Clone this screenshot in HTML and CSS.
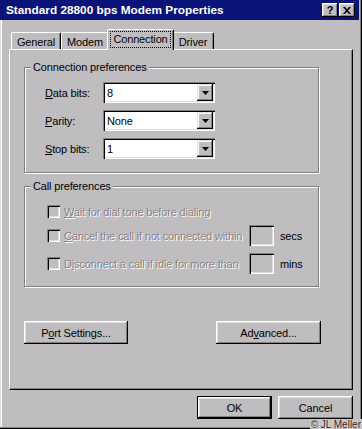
FILE: index.html
```html
<!DOCTYPE html>
<html>
<head>
<meta charset="utf-8">
<title>Standard 28800 bps Modem Properties</title>
<link rel="stylesheet" href="styles.css">
</head>
<body>
<div class="window">
  <div class="titlebar">
    <span class="title">Standard 28800 bps Modem Properties</span>
    <div class="caption-btns">
      <span class="cbtn help">?</span>
      <span class="cbtn close"><svg width="8" height="7" viewBox="0 0 8 7"><path d="M0 0h2l2 2.2L6 0h2L5 3.5 8 7H6L4 4.8 2 7H0l3-3.5z" fill="#000"/></svg></span>
    </div>
  </div>
  <div class="tabs">
    <div class="tab tab-general">General</div>
    <div class="tab tab-modem">Modem</div>
    <div class="tab tab-sel"><span class="focus">Connection</span></div>
    <div class="tab tab-driver">Driver</div>
  </div>
  <div class="panel">
    <div class="group g1">
      <span class="legend">Connection preferences</span>
      <div class="field">
        <span class="flabel"><u>D</u>ata bits:</span>
        <div class="combo"><span class="cval">8</span><span class="drop"><svg width="7" height="4" viewBox="0 0 7 4"><path d="M0 0h7L3.5 4z" fill="#000"/></svg></span></div>
      </div>
      <div class="field">
        <span class="flabel"><u>P</u>arity:</span>
        <div class="combo"><span class="cval">None</span><span class="drop"><svg width="7" height="4" viewBox="0 0 7 4"><path d="M0 0h7L3.5 4z" fill="#000"/></svg></span></div>
      </div>
      <div class="field">
        <span class="flabel"><u>S</u>top bits:</span>
        <div class="combo"><span class="cval">1</span><span class="drop"><svg width="7" height="4" viewBox="0 0 7 4"><path d="M0 0h7L3.5 4z" fill="#000"/></svg></span></div>
      </div>
    </div>
    <div class="group g2">
      <span class="legend">Call preferences</span>
      <div class="crow r1">
        <div class="check"><span class="cb"></span><span class="dis"><u>W</u>ait for dial tone before dialing</span></div>
      </div>
      <div class="crow">
        <div class="check"><span class="cb"></span><span class="dis"><u>C</u>ancel the call if not connected within</span></div>
        <span class="edit"></span>
        <span class="unit">secs</span>
      </div>
      <div class="crow">
        <div class="check"><span class="cb"></span><span class="dis">D<u>i</u>sconnect a call if idle for more than</span></div>
        <span class="edit"></span>
        <span class="unit">mins</span>
      </div>
    </div>
    <div class="btnrow">
      <span class="btn port">P<u>o</u>rt Settings...</span>
      <span class="btn adv">Ad<u>v</u>anced...</span>
    </div>
  </div>
  <div class="dlgbtns">
    <span class="btn ok">OK</span>
    <span class="btn cancel">Cancel</span>
  </div>
  <span class="copy">© JL Meller</span>
</div>
</body>
</html>
```
FILE: styles.css
```css
* { box-sizing: border-box; }
html, body { margin: 0; padding: 0; }
body {
  width: 362px;
  height: 429px;
  overflow: hidden;
  background: #c0bdc0;
  font-family: "Liberation Sans", Arial, sans-serif;
  font-size: 11px;
  letter-spacing: -0.15px;
  color: #000;
}
u { text-decoration: underline; text-underline-offset: 1px; }

.window {
  position: relative;
  width: 362px;
  height: 429px;
  background: #c0bdc0;
  box-shadow: inset -1px -1px #000, inset -2px -2px #808080, inset 1px 0 #dfdfdf, inset 2px 0 #fff;
}

.titlebar {
  height: 20px;
  margin-right: 3px;
  background: #0a1478;
  display: flex;
  align-items: center;
  justify-content: space-between;
  padding: 0 4px 0 6px;
  color: #fff;
  font-weight: bold;
  font-size: 11.8px;
  letter-spacing: 0;
}
.caption-btns { display: flex; gap: 1px; }
.cbtn {
  width: 16px;
  height: 14px;
  background: #c0bdc0;
  box-shadow: inset -1px -1px #000, inset 1px 1px #fff, inset -2px -2px #808080, inset 2px 2px #dfdfdf;
  display: flex;
  align-items: center;
  justify-content: center;
  color: #000;
  font-size: 11px;
  font-weight: bold;
  line-height: 14px;
}

.tabs {
  display: flex;
  align-items: flex-end;
  height: 20px;
  margin-top: 9px;
  padding-left: 11px;
  position: relative;
  z-index: 2;
}
.tab {
  height: 17px;
  display: flex;
  align-items: center;
  justify-content: center;
  padding-top: 1px;
  background: #c0bdc0;
  border-left: 1px solid #fff;
  border-top: 1px solid #fff;
  border-right: 1px solid #000;
  border-radius: 2px 2px 0 0;
  box-shadow: inset -1px 0 #808080;
  position: relative;
}
.tab-general { width: 50px; }
.tab-modem { width: 48px; }
.tab-driver { width: 42px; z-index: 1; }
.tab-sel {
  width: 67px;
  height: 21px;
  margin: 0 -2px -1px -2px;
  padding-top: 0;
  padding-bottom: 2px;
  z-index: 3;
}
.focus {
  outline: 1px dotted #000;
  outline-offset: 0;
  padding: 1px 2px;
  line-height: 13px;
}

.panel {
  margin-left: 9px;
  width: 344px;
  height: 341px;
  border-left: 1px solid #fff;
  border-top: 1px solid #fff;
  border-right: 1px solid #000;
  border-bottom: 1px solid #000;
  box-shadow: inset -1px -1px #808080;
  padding: 17px 0 0 14px;
}

.group {
  position: relative;
  width: 295px;
  border: 1px solid #808080;
  box-shadow: inset 1px 1px #fff, 1px 1px #fff;
}
.g1 { height: 106px; padding: 14px 0 0 20px; }
.g2 { height: 101px; margin-top: 13px; padding: 18px 0 0 22px; }
.legend {
  position: absolute;
  top: -7px;
  left: 6px;
  padding: 0 2px;
  background: #c0bdc0;
  line-height: 13px;
}

.field {
  display: flex;
  align-items: center;
  height: 21px;
  margin-bottom: 7px;
}
.flabel { width: 58px; }
.combo {
  width: 112px;
  height: 21px;
  background: #fff;
  display: flex;
  align-items: center;
  padding: 2px;
  box-shadow: inset 1px 1px #808080, inset 2px 2px #000, inset -1px -1px #fff, inset -2px -2px #dfdfdf;
}
.cval { flex: 1; padding-left: 2px; }
.drop {
  width: 16px;
  height: 17px;
  background: #c0bdc0;
  display: flex;
  align-items: center;
  justify-content: center;
  box-shadow: inset -1px -1px #000, inset 1px 1px #dfdfdf, inset -2px -2px #808080, inset 2px 2px #fff;
}

.crow {
  display: grid;
  grid-template-columns: 196px 25px auto;
  column-gap: 6px;
  align-items: center;
  height: 21px;
  margin-top: 7px;
}
.crow.r1 { height: 13px; margin-top: 0; }
.check { display: flex; align-items: center; }
.cb {
  width: 13px;
  height: 13px;
  flex: none;
  background: #c0bdc0;
  box-shadow: inset 1px 1px #808080, inset 2px 2px #000, inset -1px -1px #fff, inset -2px -2px #dfdfdf;
  margin-right: 4px;
}
.dis {
  color: #878387;
  text-shadow: 1px 1px 0 #fff;
  white-space: nowrap;
}
.edit {
  width: 25px;
  height: 21px;
  background: #c0bdc0;
  box-shadow: inset 1px 1px #808080, inset 2px 2px #000, inset -1px -1px #fff, inset -2px -2px #dfdfdf;
}
.unit { white-space: nowrap; }

.btn {
  height: 23px;
  display: flex;
  align-items: center;
  justify-content: center;
  background: #c0bdc0;
  box-shadow: inset -1px -1px #000, inset 1px 1px #fff, inset -2px -2px #808080, inset 2px 2px #dfdfdf;
}
.btnrow {
  display: flex;
  gap: 88px;
  margin-top: 34px;
}
.port { width: 104px; }
.adv { width: 105px; }

.dlgbtns {
  display: flex;
  justify-content: flex-end;
  gap: 6px;
  margin-top: 6px;
  padding-right: 9px;
}
.ok, .cancel { width: 75px; }
.ok {
  border: 1px solid #000;
  box-shadow: inset -1px -1px #000, inset 1px 1px #fff, inset -2px -2px #808080, inset 2px 2px #dfdfdf;
}

.copy {
  position: absolute;
  right: 0;
  bottom: -1px;
  font-size: 10px;
  line-height: 11px;
  letter-spacing: 0;
  color: #202020;
  background: #c8c5c8;
  padding: 0 1px;
  text-shadow: 0 0 1px #fff;
}
```
